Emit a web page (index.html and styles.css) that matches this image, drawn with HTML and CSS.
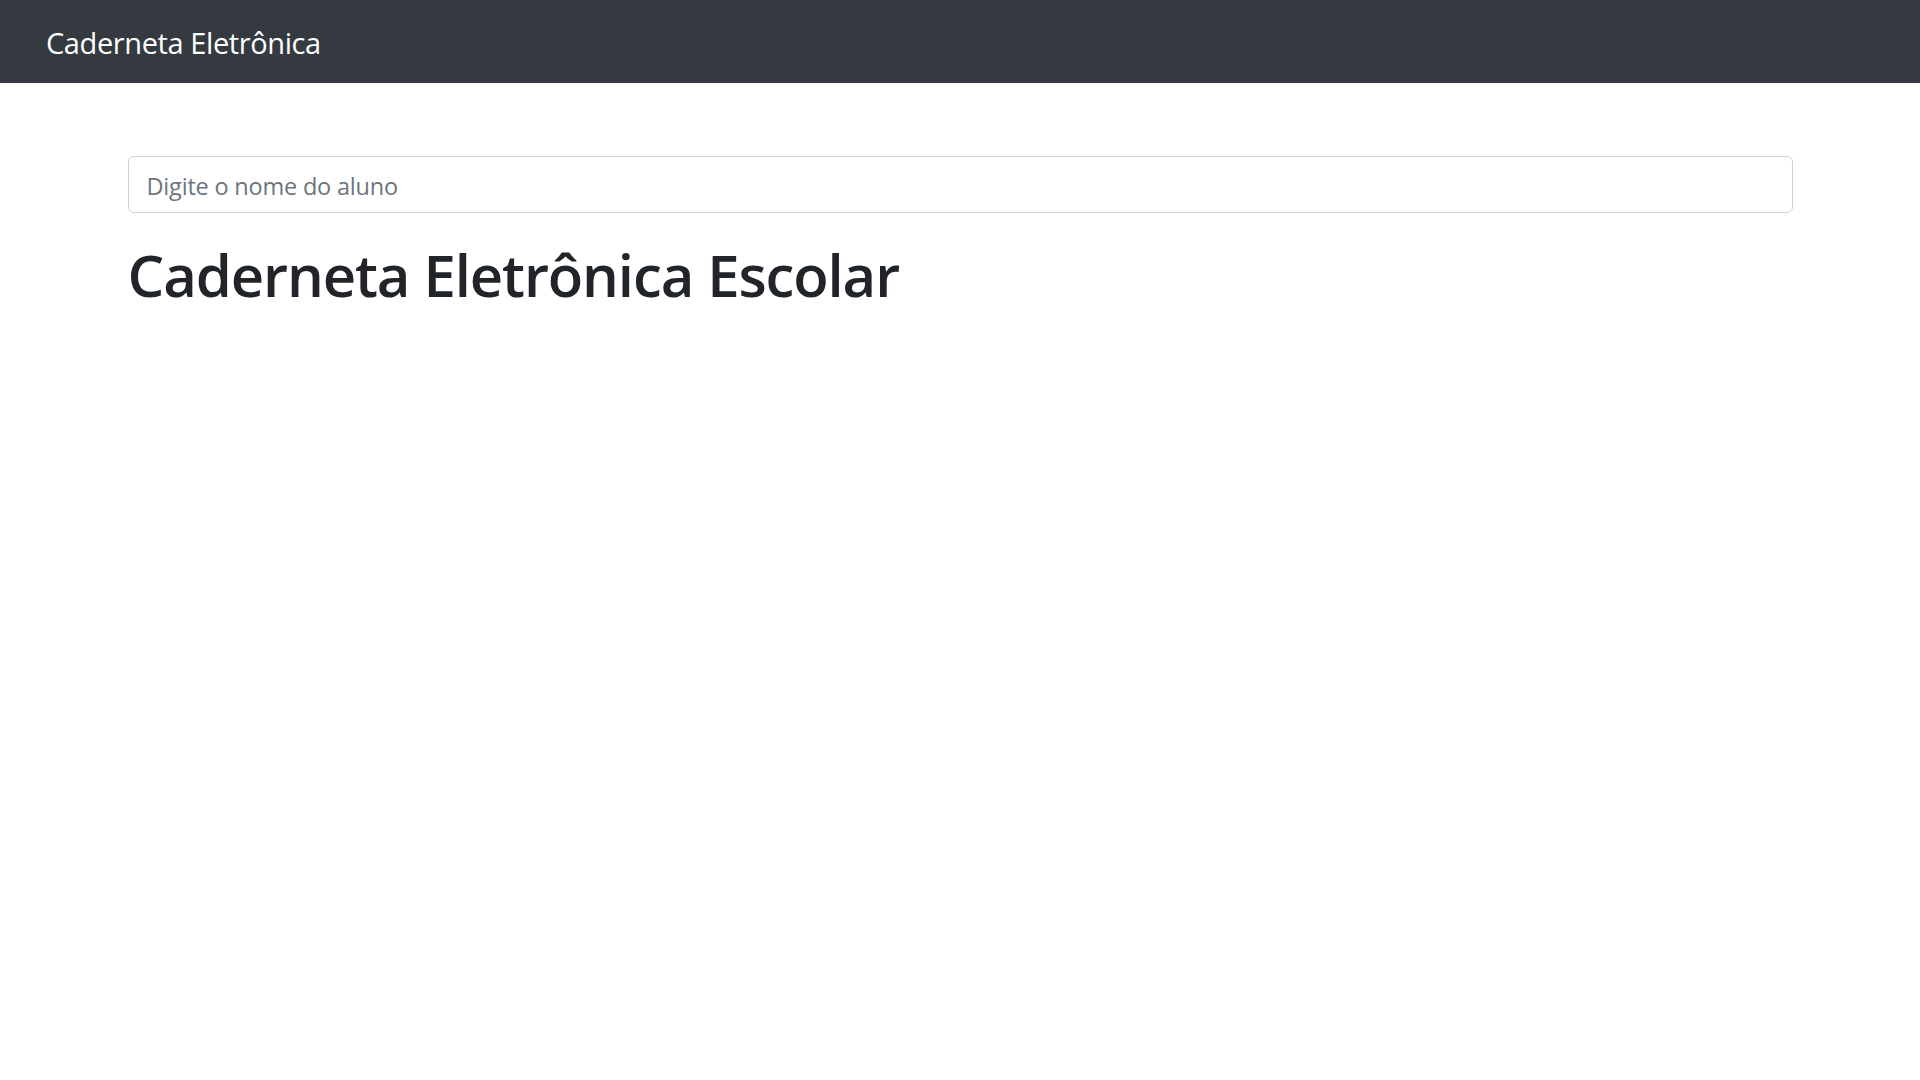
FILE: index.html
```html
<!DOCTYPE html>
<html lang="pt-BR">
<head>
<meta charset="utf-8">
<title>Caderneta Eletrônica</title>
<link rel="stylesheet" href="styles.css">
</head>
<body>
<nav class="navbar">
  <span class="brand">Caderneta Eletrônica</span>
</nav>
<main class="container">
  <input class="search" type="text" placeholder="Digite o nome do aluno">
  <h1 class="title">Caderneta Eletrônica Escolar</h1>
</main>
</body>
</html>
```
FILE: styles.css
```css
* { box-sizing: border-box; }
html, body { margin: 0; padding: 0; }
body {
  font-family: "Open Sans", "Noto Sans", sans-serif;
  font-size: 24px;
  color: #212529;
  background: #fff;
}
.navbar {
  background: #343a40;
  height: 83px;
  display: flex;
  align-items: center;
  padding: 0 46px;
}
.brand {
  color: #fff;
  font-size: 29px;
  letter-spacing: -0.4px;
  line-height: 45px;
  padding-top: 2px;
}
.container {
  width: 1710px;
  margin: 0 auto;
  padding: 73px 22.5px 0;
}
.search {
  display: block;
  width: 100%;
  height: 57px;
  padding: 2px 18px 0;
  font-family: inherit;
  font-size: 23.5px;
  letter-spacing: -0.2px;
  color: #495057;
  border: 1.5px solid #ced4da;
  border-radius: 6px;
  outline: none;
}
.search::placeholder { color: #6c757d; }
.title {
  margin: 26px 0 0;
  font-size: 58px;
  font-weight: 600;
  letter-spacing: -1.1px;
  line-height: 72px;
}
```
